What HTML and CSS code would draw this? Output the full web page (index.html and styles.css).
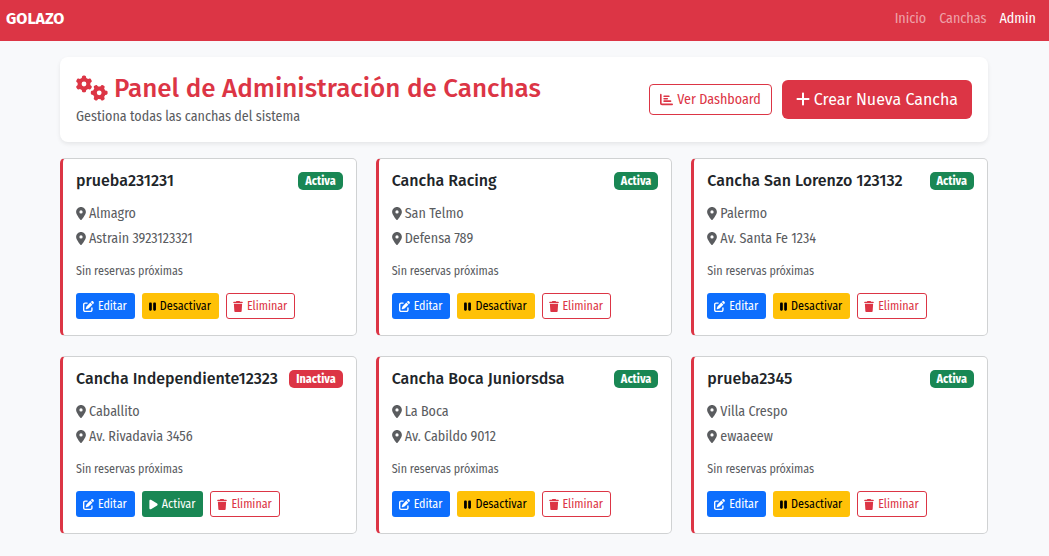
FILE: index.html
```html
<!DOCTYPE html>
<html lang="es">
<head>
<meta charset="utf-8">
<meta name="viewport" content="width=device-width, initial-scale=1">
<title>Golazo - Panel de Administración</title>
<link rel="stylesheet" href="styles.css">
</head>
<body>
<svg class="sprite" aria-hidden="true">
  <symbol id="gears" viewBox="0 0 640 512"><path d="M308.5 135.3c7.1-6.3 9.9-16.2 6.2-25c-2.3-5.3-4.8-10.5-7.6-15.5L304 89.4c-3-5-6.3-9.9-9.8-14.6c-5.7-7.6-15.7-10.1-24.7-7.1l-28.2 9.3c-10.7-8.8-23-16-36.2-20.9L199 27.1c-1.9-9.3-9.1-16.7-18.5-17.8C173.9 8.4 167.2 8 160.4 8h-.7c-6.8 0-13.5 .4-20.1 1.2c-9.4 1.1-16.6 8.6-18.5 17.8L115 56.1c-13.3 5-25.5 12.1-36.2 20.9L50.5 67.8c-9-3-19-.5-24.7 7.1c-3.5 4.7-6.8 9.6-9.9 14.6l-3 5.3c-2.8 5-5.3 10.2-7.6 15.6c-3.7 8.7-.9 18.6 6.2 25l22.2 19.8C32.6 161.9 32 168.9 32 176s.6 14.1 1.7 20.9L11.5 216.7c-7.1 6.3-9.9 16.2-6.2 25c2.3 5.3 4.8 10.5 7.6 15.6l3 5.2c3 5.1 6.3 9.9 9.9 14.6c5.7 7.6 15.7 10.1 24.7 7.1l28.2-9.3c10.7 8.8 23 16 36.2 20.9l6.1 29.1c1.9 9.3 9.1 16.7 18.5 17.8c6.7 .8 13.5 1.2 20.4 1.2s13.7-.4 20.4-1.2c9.4-1.1 16.6-8.6 18.5-17.8l6.1-29.1c13.3-5 25.5-12.1 36.2-20.9l28.2 9.3c9 3 19 .5 24.7-7.1c3.5-4.7 6.8-9.5 9.8-14.6l3.1-5.4c2.8-5 5.3-10.2 7.6-15.5c3.7-8.7 .9-18.6-6.2-25l-22.2-19.8c1.1-6.8 1.7-13.8 1.7-20.9s-.6-14.1-1.7-20.9l22.2-19.8zM112 176a48 48 0 1 1 96 0 48 48 0 1 1 -96 0zM504.7 500.5c6.3 7.1 16.2 9.9 25 6.2c5.3-2.3 10.5-4.8 15.5-7.6l5.4-3.1c5-3 9.9-6.3 14.6-9.8c7.6-5.7 10.1-15.7 7.1-24.7l-9.3-28.2c8.8-10.7 16-23 20.9-36.2l29.1-6.1c9.3-1.9 16.7-9.1 17.8-18.5c.8-6.7 1.2-13.5 1.2-20.4s-.4-13.7-1.2-20.4c-1.1-9.4-8.6-16.6-17.8-18.5L583.9 307c-5-13.3-12.1-25.5-20.9-36.2l9.3-28.2c3-9 .5-19-7.1-24.7c-4.7-3.5-9.6-6.8-14.6-9.9l-5.3-3c-5-2.8-10.2-5.3-15.6-7.6c-8.7-3.7-18.6-.9-25 6.2l-19.8 22.2c-6.8-1.1-13.8-1.7-20.9-1.7s-14.1 .6-20.9 1.7l-19.8-22.2c-6.3-7.1-16.2-9.9-25-6.2c-5.3 2.3-10.5 4.8-15.6 7.6l-5.2 3c-5.1 3-9.9 6.3-14.6 9.9c-7.6 5.7-10.1 15.7-7.1 24.7l9.3 28.2c-8.8 10.7-16 23-20.9 36.2L315.1 313c-9.3 1.9-16.7 9.1-17.8 18.5c-.8 6.7-1.2 13.5-1.2 20.4s.4 13.7 1.2 20.4c1.1 9.4 8.6 16.6 17.8 18.5l29.1 6.1c5 13.3 12.1 25.5 20.9 36.2l-9.3 28.2c-3 9-.5 19 7.1 24.7c4.7 3.5 9.5 6.8 14.6 9.8l5.4 3.1c5 2.8 10.2 5.3 15.5 7.6c8.7 3.7 18.6 .9 25-6.2l19.8-22.2c6.8 1.1 13.8 1.7 20.9 1.7s14.1-.6 20.9-1.7l19.8 22.2zM464 304a48 48 0 1 1 0 96 48 48 0 1 1 0-96z"/></symbol>
  <symbol id="pin" viewBox="0 0 384 512"><path d="M215.7 499.2C267 435 384 279.4 384 192C384 86 298 0 192 0S0 86 0 192c0 87.4 117 243 168.3 307.2c12.3 15.3 35.1 15.3 47.4 0zM192 128a64 64 0 1 1 0 128 64 64 0 1 1 0-128z"/></symbol>
  <symbol id="edit" viewBox="0 0 512 512"><path d="M471.6 21.7c-21.9-21.9-57.3-21.9-79.2 0L362.3 51.7l97.9 97.9 30.1-30.1c21.9-21.9 21.9-57.3 0-79.2L471.6 21.7zm-299.2 220c-6.1 6.1-10.8 13.6-13.5 21.9l-29.6 88.8c-2.9 8.6-.6 18.1 5.8 24.6s15.9 8.7 24.6 5.8l88.8-29.6c8.2-2.7 15.7-7.4 21.9-13.5L437.7 172.3 339.7 74.3 172.4 241.7zM96 64C43 64 0 107 0 160V416c0 53 43 96 96 96H352c53 0 96-43 96-96V320c0-17.7-14.3-32-32-32s-32 14.3-32 32v96c0 17.7-14.3 32-32 32H96c-17.7 0-32-14.3-32-32V160c0-17.7 14.3-32 32-32h96c17.7 0 32-14.3 32-32s-14.3-32-32-32H96z"/></symbol>
  <symbol id="pause" viewBox="0 0 320 512"><path d="M48 64C21.5 64 0 85.5 0 112V400c0 26.5 21.5 48 48 48H80c26.5 0 48-21.5 48-48V112c0-26.5-21.5-48-48-48H48zm192 0c-26.5 0-48 21.5-48 48V400c0 26.5 21.5 48 48 48h32c26.5 0 48-21.5 48-48V112c0-26.5-21.5-48-48-48H240z"/></symbol>
  <symbol id="play" viewBox="0 0 384 512"><path d="M73 39c-14.8-9.1-33.4-9.4-48.5-.9S0 62.6 0 80V432c0 17.4 9.4 33.4 24.5 41.9s33.7 8.1 48.5-.9L361 297c14.3-8.7 23-24.2 23-41s-8.7-32.2-23-41L73 39z"/></symbol>
  <symbol id="trash" viewBox="0 0 448 512"><path d="M135.2 17.7L128 32H32C14.3 32 0 46.3 0 64S14.3 96 32 96H416c17.7 0 32-14.3 32-32s-14.3-32-32-32H320l-7.2-14.3C307.4 6.8 296.3 0 284.2 0H163.8c-12.1 0-23.2 6.8-28.6 17.7zM416 128H32L53.2 467c1.6 25.3 22.6 45 47.9 45H346.9c25.3 0 46.3-19.7 47.9-45L416 128z"/></symbol>
  <symbol id="plus" viewBox="0 0 448 512"><path d="M256 80c0-17.7-14.3-32-32-32s-32 14.3-32 32V224H48c-17.7 0-32 14.3-32 32s14.3 32 32 32H192V432c0 17.7 14.3 32 32 32s32-14.3 32-32V288H400c17.7 0 32-14.3 32-32s-14.3-32-32-32H256V80z"/></symbol>
  <symbol id="chart" viewBox="0 0 512 512"><path d="M32 32c17.7 0 32 14.3 32 32V400c0 8.8 7.2 16 16 16H480c17.7 0 32 14.3 32 32s-14.3 32-32 32H80c-44.2 0-80-35.8-80-80V64C0 46.3 14.3 32 32 32zm96 96c0-17.7 14.3-32 32-32l192 0c17.7 0 32 14.3 32 32s-14.3 32-32 32l-192 0c-17.7 0-32-14.3-32-32zm32 64H288c17.7 0 32 14.3 32 32s-14.3 32-32 32H160c-17.7 0-32-14.3-32-32s14.3-32 32-32zm0 96H416c17.7 0 32 14.3 32 32s-14.3 32-32 32H160c-17.7 0-32-14.3-32-32s14.3-32 32-32z"/></symbol>
</svg>

<nav class="navbar">
  <a class="brand" href="#">GOLAZO</a>
  <div class="nav-links">
    <a class="nav-link" href="#">Inicio</a>
    <a class="nav-link" href="#">Canchas</a>
    <a class="nav-link active" href="#" aria-current="page">Admin</a>
  </div>
</nav>

<main class="container">
  <header class="panel">
    <div class="panel-text">
      <h1 class="panel-title"><svg class="icon icon-gears"><use href="#gears"/></svg>Panel de Administración de Canchas</h1>
      <p class="panel-subtitle">Gestiona todas las canchas del sistema</p>
    </div>
    <div class="panel-actions">
      <a class="btn btn-md btn-outline" href="#"><svg class="icon icon-md"><use href="#chart"/></svg>Ver Dashboard</a>
      <a class="btn btn-lg btn-danger" href="#"><svg class="icon icon-lg"><use href="#plus"/></svg>Crear Nueva Cancha</a>
    </div>
  </header>

  <section class="grid">
    <article class="card">
      <div class="card-head"><h2 class="card-title">prueba231231</h2><span class="badge">Activa</span></div>
      <div class="places">
        <p class="place"><svg class="icon icon-pin"><use href="#pin"/></svg>Almagro</p>
        <p class="place"><svg class="icon icon-pin"><use href="#pin"/></svg>Astrain 3923123321</p>
      </div>
      <p class="note">Sin reservas próximas</p>
      <div class="actions">
        <button class="btn btn-sm btn-primary" type="button"><svg class="icon icon-edit"><use href="#edit"/></svg>Editar</button>
        <button class="btn btn-sm btn-warning" type="button"><svg class="icon icon-pause"><use href="#pause"/></svg>Desactivar</button>
        <button class="btn btn-sm btn-outline" type="button"><svg class="icon icon-trash"><use href="#trash"/></svg>Eliminar</button>
      </div>
    </article>
    <article class="card">
      <div class="card-head"><h2 class="card-title">Cancha Racing</h2><span class="badge">Activa</span></div>
      <div class="places">
        <p class="place"><svg class="icon icon-pin"><use href="#pin"/></svg>San Telmo</p>
        <p class="place"><svg class="icon icon-pin"><use href="#pin"/></svg>Defensa 789</p>
      </div>
      <p class="note">Sin reservas próximas</p>
      <div class="actions">
        <button class="btn btn-sm btn-primary" type="button"><svg class="icon icon-edit"><use href="#edit"/></svg>Editar</button>
        <button class="btn btn-sm btn-warning" type="button"><svg class="icon icon-pause"><use href="#pause"/></svg>Desactivar</button>
        <button class="btn btn-sm btn-outline" type="button"><svg class="icon icon-trash"><use href="#trash"/></svg>Eliminar</button>
      </div>
    </article>
    <article class="card">
      <div class="card-head"><h2 class="card-title">Cancha San Lorenzo 123132</h2><span class="badge">Activa</span></div>
      <div class="places">
        <p class="place"><svg class="icon icon-pin"><use href="#pin"/></svg>Palermo</p>
        <p class="place"><svg class="icon icon-pin"><use href="#pin"/></svg>Av. Santa Fe 1234</p>
      </div>
      <p class="note">Sin reservas próximas</p>
      <div class="actions">
        <button class="btn btn-sm btn-primary" type="button"><svg class="icon icon-edit"><use href="#edit"/></svg>Editar</button>
        <button class="btn btn-sm btn-warning" type="button"><svg class="icon icon-pause"><use href="#pause"/></svg>Desactivar</button>
        <button class="btn btn-sm btn-outline" type="button"><svg class="icon icon-trash"><use href="#trash"/></svg>Eliminar</button>
      </div>
    </article>
    <article class="card">
      <div class="card-head"><h2 class="card-title">Cancha Independiente12323</h2><span class="badge badge-off">Inactiva</span></div>
      <div class="places">
        <p class="place"><svg class="icon icon-pin"><use href="#pin"/></svg>Caballito</p>
        <p class="place"><svg class="icon icon-pin"><use href="#pin"/></svg>Av. Rivadavia 3456</p>
      </div>
      <p class="note">Sin reservas próximas</p>
      <div class="actions">
        <button class="btn btn-sm btn-primary" type="button"><svg class="icon icon-edit"><use href="#edit"/></svg>Editar</button>
        <button class="btn btn-sm btn-success" type="button"><svg class="icon icon-play"><use href="#play"/></svg>Activar</button>
        <button class="btn btn-sm btn-outline" type="button"><svg class="icon icon-trash"><use href="#trash"/></svg>Eliminar</button>
      </div>
    </article>
    <article class="card">
      <div class="card-head"><h2 class="card-title">Cancha Boca Juniorsdsa</h2><span class="badge">Activa</span></div>
      <div class="places">
        <p class="place"><svg class="icon icon-pin"><use href="#pin"/></svg>La Boca</p>
        <p class="place"><svg class="icon icon-pin"><use href="#pin"/></svg>Av. Cabildo 9012</p>
      </div>
      <p class="note">Sin reservas próximas</p>
      <div class="actions">
        <button class="btn btn-sm btn-primary" type="button"><svg class="icon icon-edit"><use href="#edit"/></svg>Editar</button>
        <button class="btn btn-sm btn-warning" type="button"><svg class="icon icon-pause"><use href="#pause"/></svg>Desactivar</button>
        <button class="btn btn-sm btn-outline" type="button"><svg class="icon icon-trash"><use href="#trash"/></svg>Eliminar</button>
      </div>
    </article>
    <article class="card">
      <div class="card-head"><h2 class="card-title">prueba2345</h2><span class="badge">Activa</span></div>
      <div class="places">
        <p class="place"><svg class="icon icon-pin"><use href="#pin"/></svg>Villa Crespo</p>
        <p class="place"><svg class="icon icon-pin"><use href="#pin"/></svg>ewaaeew</p>
      </div>
      <p class="note">Sin reservas próximas</p>
      <div class="actions">
        <button class="btn btn-sm btn-primary" type="button"><svg class="icon icon-edit"><use href="#edit"/></svg>Editar</button>
        <button class="btn btn-sm btn-warning" type="button"><svg class="icon icon-pause"><use href="#pause"/></svg>Desactivar</button>
        <button class="btn btn-sm btn-outline" type="button"><svg class="icon icon-trash"><use href="#trash"/></svg>Eliminar</button>
      </div>
    </article>
  </section>
</main>
</body>
</html>
```

FILE: styles.css
```css
* { box-sizing: border-box; }

body {
  margin: 0;
  background: #f8f9fb;
  color: #212529;
  font-family: "Fira Sans Condensed", "Fira Sans", Roboto, sans-serif;
  font-size: 14px;
  line-height: 21px;
}

h1, h2, p { margin: 0; }
a { text-decoration: none; }

.sprite { position: absolute; width: 0; height: 0; }
.icon { flex: none; fill: currentColor; }
.icon-gears { width: 32px; height: 26px; margin-bottom: 2px; }
.icon-pin { width: 10px; height: 13px; }
.icon-md { width: 13px; height: 13px; }
.icon-lg { width: 14px; height: 16px; }
.icon-edit { width: 11px; height: 11px; }
.icon-pause { width: 7px; height: 11px; }
.icon-play { width: 9px; height: 11px; }
.icon-trash { width: 10px; height: 11px; }

.navbar {
  display: flex;
  align-items: center;
  justify-content: space-between;
  padding: 8px 13px 12px 6px;
  background: #dc3545;
}
.brand,
.panel-title,
.card-title,
.btn-lg { font-family: "Fira Sans", Roboto, sans-serif; }

.brand { color: #fff; font-size: 16px; font-weight: 700; }
.nav-links { display: flex; gap: 13px; }
.nav-link { color: rgba(255, 255, 255, 0.55); }
.nav-link.active { color: #fff; }

.container { padding: 16px 61px 22px 60px; }

.panel {
  display: flex;
  align-items: center;
  justify-content: space-between;
  gap: 16px;
  margin-bottom: 16px;
  padding: 14px 16px 15px;
  background: #fff;
  border-radius: 8px;
  box-shadow: 0 2px 4px rgba(0, 0, 0, 0.08);
}
.panel-title {
  display: flex;
  align-items: center;
  gap: 6px;
  color: #dc3545;
  font-size: 26px;
  font-weight: 500;
  line-height: 35px;
}
.panel-subtitle { color: #5a5c5f; }
.panel-actions { display: flex; align-items: center; gap: 10px; }

.btn {
  display: inline-flex;
  align-items: center;
  border: 1px solid transparent;
  white-space: nowrap;
}
.btn-sm {
  gap: 4px;
  padding: 3px 7px 3px 6px;
  border-radius: 3px;
  font-family: inherit;
  font-size: 12px;
  line-height: 18px;
}
.btn-md { gap: 4px; padding: 4px 10px; border-radius: 4px; font-size: 14px; line-height: 21px; }
.btn-lg { gap: 4px; padding: 7px 13px; border-radius: 6px; font-size: 16px; line-height: 23px; }
.btn-danger { background: #dc3545; color: #fff; }
.btn-primary { background: #0d6efd; color: #fff; }
.btn-warning { background: #ffc107; color: #000; }
.btn-success { background: #198754; color: #fff; }
.btn-outline { background: #fff; border-color: #dc3545; color: #dc3545; }

.grid { display: grid; grid-template-columns: repeat(3, 1fr); gap: 20px 19px; }

.card {
  display: flex;
  flex-direction: column;
  gap: 13px;
  padding: 13px 13px 16px;
  background: #fff;
  border: 1px solid #d0d2d3;
  border-left: 3px solid #dc3545;
  border-radius: 5px;
}
.card-head { display: flex; align-items: center; justify-content: space-between; gap: 8px; }
.card-title { font-size: 16px; font-weight: 500; line-height: 18px; }
.badge {
  padding: 0 7px;
  border-radius: 5px;
  background: #198754;
  color: #fff;
  font-size: 12px;
  font-weight: 700;
  line-height: 18px;
}
.badge-off { background: #dc3545; }
.places { display: flex; flex-direction: column; gap: 4px; }
.place { display: flex; align-items: center; gap: 3px; color: #5a5c5f; }
.note { color: #5a5c5f; font-size: 12px; line-height: 18px; }
.actions { display: flex; flex-wrap: wrap; gap: 7px; }
```
